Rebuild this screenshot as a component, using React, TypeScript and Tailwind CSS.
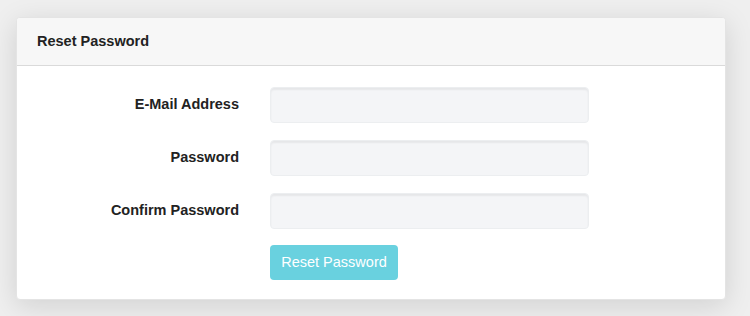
const fields = [
  { label: "E-Mail Address", type: "email" },
  { label: "Password", type: "password" },
  { label: "Confirm Password", type: "password" },
];

export default function App() {
  return (
    <div className="min-h-[316px] bg-[#efefef] pt-[17px] pl-4 pr-[24px] font-['Liberation_Sans',Arial,sans-serif] text-[#222]">
      <div className="overflow-hidden rounded-[4px] border border-[#e4e4e4] bg-white shadow-[0_6px_28px_rgba(0,0,0,0.13)]">
        <div className="flex h-[48px] items-center border-b border-[#dadada] bg-[#f7f7f7] px-5 text-[14.5px] font-bold">
          Reset Password
        </div>

        <form className="flex flex-col gap-[17px] pt-[21px] pb-[19px]">
          {fields.map((f) => (
            <div key={f.label} className="flex items-center">
              <label className="w-[222px] text-right text-[14.5px] font-bold">
                {f.label}
              </label>
              <input
                type={f.type}
                className="ml-[31px] h-[36px] w-[319px] rounded-[4px] border border-[#eceef0] bg-[#f4f5f7] shadow-[inset_0_2px_2px_rgba(0,0,0,0.06)] outline-none"
              />
            </div>
          ))}

          <div className="-mt-[1px] flex">
            <button
              type="button"
              className="ml-[253px] h-[35px] w-[128px] rounded-[4px] bg-[#69d1df] text-[14.5px] text-white"
            >
              Reset Password
            </button>
          </div>
        </form>
      </div>
    </div>
  );
}
